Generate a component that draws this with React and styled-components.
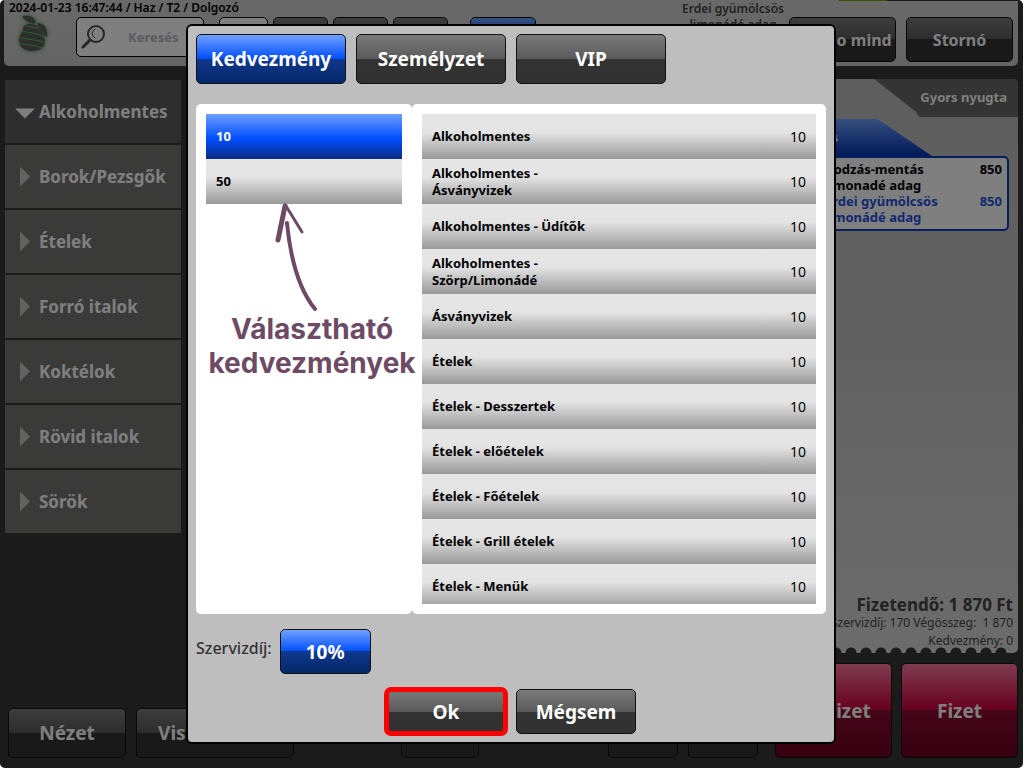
import React from "react";
import styled, { createGlobalStyle, css } from "styled-components";

const categories = ["Alkoholmentes", "Borok/Pezsgők", "Ételek", "Forró italok", "Koktélok", "Rövid italok", "Sörök"];

const tabs = ["Kedvezmény", "Személyzet", "VIP"];

const discounts = [10, 50];

const groups = [
  "Alkoholmentes",
  "Alkoholmentes - Ásványvizek",
  "Alkoholmentes - Üdítők",
  "Alkoholmentes - Szörp/Limonádé",
  "Ásványvizek",
  "Ételek",
  "Ételek - Desszertek",
  "Ételek - előételek",
  "Ételek - Főételek",
  "Ételek - Grill ételek",
  "Ételek - Menük",
];

const App = () => {
  return (
    <>
      <GlobalStyle />
      <Screen>
        <Header />
        <Main>
          <Sidebar>
            {categories.map((name, i) => (
              <Category key={name} type="button" $open={i === 0}>
                <Caret $open={i === 0} />
                {name}
              </Category>
            ))}
          </Sidebar>
          <Receipt />
        </Main>
        <Footer />
        <Overlay>
          <DiscountDialog />
        </Overlay>
      </Screen>
    </>
  );
};

const Header = () => (
  <TopBar>
    <Brand>
      <Status>2024-01-23 16:47:44 / Haz / T2 / Dolgozó</Status>
      <Logo />
    </Brand>
    <Search>
      <SearchIcon />
      <input type="text" placeholder="Keresés" aria-label="Keresés" />
    </Search>
    <Tools>
      <Button $tone="light" $w={49} aria-label="Lista" />
      <Button $w={55} aria-label="Kártya" />
      <Button $w={55} aria-label="Asztal" />
      <Button $w={55} aria-label="Vendég" />
      <BlueTool $tone="blue" $w={66} aria-label="Kedvezmény" />
    </Tools>
    <LastItem>Erdei gyümölcsös limonádé adag</LastItem>
    <Actions>
      <Button $w={107} $size={16}>Storno mind</Button>
      <Button $w={107} $size={16}>Stornó</Button>
    </Actions>
    <Progress />
  </TopBar>
);

const Logo = () => (
  <LogoSvg width="34" height="38" viewBox="0 0 34 38" aria-hidden="true">
    <path d="M5 1C11 0 18 1 19 8C13 9 8 6 5 1z" />
    <path d="M20 8C27 8 31 13 30 22C25 20 22 14 20 8z" />
    <path d="M8 10C13 8 18 9 21 12C23 17 28 21 28 27C28 33 22 36 15 36C7 36 2 32 2 25C2 19 5 18 6 15C6 13 6 11 8 10z" />
    <g>
      <path d="M7 10C12 12 17 13 22 13M5 16C12 18 21 18 27 22M2 22C10 25 20 24 28 28M2 28C9 30 19 30 26 33" />
    </g>
  </LogoSvg>
);

const SearchIcon = () => (
  <svg width="24" height="24" viewBox="0 0 24 24" fill="none" stroke="#4c4c4c" strokeLinecap="round" aria-hidden="true">
    <circle cx="15" cy="9" r="8" strokeWidth="2" />
    <path d="M9 15l-7 7" strokeWidth="3" />
    <path d="M14 4a5 5 0 0 0 0 9" strokeWidth="1" />
  </svg>
);

const Receipt = () => (
  <ReceiptPanel>
    <QuickTab>
      <svg width="46" height="38" viewBox="0 0 46 38" aria-hidden="true">
        <path d="M0 0H46V38C45 38 44 35 41 32L4 3Q2 1 0 0z" fill="#686868" />
      </svg>
      <QuickLabel type="button">Gyors nyugta</QuickLabel>
    </QuickTab>
    <OrderTab>
      <span>Rendelés</span>
      <svg width="56" height="37" viewBox="0 0 56 37" aria-hidden="true">
        <defs>
          <linearGradient id="tab" x1="0" x2="0" y1="0" y2="1">
            <stop offset="0" stopColor="#6e9fff" />
            <stop offset="1" stopColor="#0033b4" />
          </linearGradient>
        </defs>
        <path d="M0 0Q3 0 6 3L56 37H0z" fill="url(#tab)" />
      </svg>
    </OrderTab>
    <OrderTable>
      <tbody>
        <tr>
          <td>Bodzás-mentás limonadé adag</td>
          <td>850</td>
        </tr>
        <Selected>
          <td>Erdei gyümölcsös limonádé adag</td>
          <td>850</td>
        </Selected>
      </tbody>
    </OrderTable>
    <Totals>
      <strong>Fizetendő: 1 870 Ft</strong>
      <span>Szervizdíj: 170 Végösszeg:&nbsp; 1 870</span>
      <span>Kedvezmény: 0</span>
    </Totals>
    <Perforation />
  </ReceiptPanel>
);

const Footer = () => (
  <BottomBar>
    <Button $w={118} $h={50}>Nézet</Button>
    <Button $w={158} $h={50}>Visszavonás</Button>
    <Spacer $grow={4} />
    <Button $w={78} $h={50} aria-label="Lap" />
    <Spacer $grow={5} />
    <Button $w={70} $h={50} aria-label="Előző" />
    <Button $w={70} $h={50} aria-label="Következő" />
    <PayGroup>
      <Button $tone="red" $w={117} $h={95}>Kp Fizet</Button>
      <Button $tone="red" $w={117} $h={95}>Fizet</Button>
    </PayGroup>
  </BottomBar>
);

const DiscountDialog = () => (
  <Dialog role="dialog" aria-label="Kedvezmény">
    <Tabs>
      {tabs.map((name, i) => (
        <Button key={name} $tone={i === 0 ? "blue" : "dark"} $w={150} $h={50}>
          {name}
        </Button>
      ))}
    </Tabs>
    <Panels>
      <Panel>
        {discounts.map((value, i) => (
          <Option key={value} type="button" $selected={i === 0}>
            {value}
          </Option>
        ))}
        <Note>
          <svg width="30" height="108" viewBox="0 0 30 108" aria-hidden="true">
            <path d="M9 2L2 36" strokeWidth="5" />
            <path d="M10 2L26 28" strokeWidth="3" />
            <path d="M11 19C14 50 21 83 39 105" strokeWidth="4" />
          </svg>
          Választható kedvezmények
        </Note>
      </Panel>
      <Panel>
        <GroupList>
          {groups.map((name) => (
            <Group key={name}>
              <b>{name}</b>
              <span>10</span>
            </Group>
          ))}
        </GroupList>
      </Panel>
    </Panels>
    <ServiceRow>
      <label htmlFor="service">Szervizdíj:</label>
      <Button id="service" $tone="blue" $w={91}>10%</Button>
    </ServiceRow>
    <Buttons>
      <OkButton $w={120}>Ok</OkButton>
      <Button $w={120}>Mégsem</Button>
    </Buttons>
  </Dialog>
);

const GlobalStyle = createGlobalStyle`
  * {
    box-sizing: border-box;
  }
  body {
    margin: 0;
    background: #fff;
    color: #000;
    font-family: "Noto Sans", "Open Sans", sans-serif;
  }
  button,
  input {
    font: inherit;
  }
`;

const tones = {
  dark: "linear-gradient(#7a7a7a, #5a5a5a 50%, #333 50%, #323232)",
  blue: "linear-gradient(#70a1ff, #004dff 50%, #10388c 50%, #04286a)",
  red: "linear-gradient(#ff769e, #d00040 49%, #8a0c30 50%, #6c0020)",
  light: "linear-gradient(#fff, #e4e4e4)",
};

const Button = styled.button.attrs({ type: "button" })`
  flex: none;
  width: ${({ $w }) => $w}px;
  height: ${({ $h = 45 }) => $h}px;
  padding: 0;
  border: 1px solid #111;
  border-radius: 5px;
  background: ${({ $tone = "dark" }) => tones[$tone]};
  color: #fff;
  font-size: ${({ $size = 19 }) => $size}px;
  font-weight: 700;
  white-space: nowrap;
  overflow: hidden;
`;

const Screen = styled.div`
  position: relative;
  display: flex;
  flex-direction: column;
  min-height: calc(100vh - 1px);
  margin-right: 1px;
  padding: 0 5px 10px 4px;
  background: #363636;
  border-radius: 5px;
  overflow: hidden;
`;

const TopBar = styled.header`
  position: relative;
  display: flex;
  align-items: flex-start;
  height: 66px;
  padding-right: 5px;
  background: linear-gradient(#d2d2d2, #c8c8c8);
  border-radius: 0 0 5px 5px;
`;

const Brand = styled.div`
  width: 72px;
  padding-left: 5px;
`;

const Status = styled.div`
  font-size: 12px;
  font-weight: 600;
  line-height: 15px;
  white-space: nowrap;
`;

const LogoSvg = styled.svg`
  display: block;
  margin-left: 8px;
  fill: #5c5c5c;
  filter: drop-shadow(0 0 2px #4c9a4c);

  g {
    fill: none;
    stroke: #58c458;
    stroke-width: 1;
  }
`;

const Search = styled.div`
  display: flex;
  align-items: center;
  width: 128px;
  height: 40px;
  margin-top: 17px;
  padding: 0 4px;
  border: 1px solid #000;
  border-radius: 5px;
  background: #fff;

  input {
    flex: 1;
    min-width: 0;
    padding: 0 0 0 23px;
    border: 0;
    background: none;
    font-size: 13px;
    font-weight: 700;
  }
  input::placeholder {
    color: #b4b4bc;
  }
`;

const Tools = styled.div`
  display: flex;
  gap: 5px;
  margin: 17px 0 0 15px;
`;

const BlueTool = styled(Button)`
  margin-left: 17px;
`;

const LastItem = styled.div`
  width: 112px;
  margin: 1px 0 0 auto;
  color: #444;
  font-size: 12px;
  font-weight: 600;
  line-height: 16px;
  text-align: center;
`;

const Actions = styled.div`
  display: flex;
  gap: 10px;
  padding-top: 17px;
`;

const Progress = styled.div`
  position: absolute;
  top: 0;
  right: 0;
  width: 179px;
  height: 1px;
  background: linear-gradient(90deg, #6aa800 48px, #333 48px);
`;

const Main = styled.div`
  flex: 1;
  display: flex;
  justify-content: space-between;
`;

const Sidebar = styled.nav`
  display: flex;
  flex-direction: column;
  gap: 2px;
  width: 177px;
  padding: 14px 0 0 1px;
`;

const Category = styled.button`
  display: flex;
  align-items: center;
  height: 63px;
  padding: 0 0 0 10px;
  border: 0;
  background: ${({ $open }) => ($open ? "#5c5c5c" : "#747470")};
  color: #fff;
  font-size: 17px;
  font-weight: 700;
`;

const Caret = styled.span`
  width: 20px;
  height: 20px;
  margin-right: 4px;
  background: ${({ $open }) => ($open ? "#fff" : "#c4c4c4")};
  clip-path: ${({ $open }) =>
    $open ? "polygon(0 7px, 100% 7px, 50% 17px)" : "polygon(5px 0, 15px 50%, 5px 100%)"};
`;

const ReceiptPanel = styled.section`
  display: flex;
  flex-direction: column;
  width: 244px;
  margin-top: 13px;
  background: linear-gradient(#bcbcbc, #c4c4c4 50%, #d8d8d8);
  border-radius: 5px;
  overflow: hidden;
`;

const QuickTab = styled.div`
  display: flex;
  justify-content: flex-end;
`;

const QuickLabel = styled.button`
  width: 98px;
  height: 38px;
  padding: 0 11px 2px 0;
  border: 0;
  background: #686868;
  color: #fff;
  font-size: 13px;
  font-weight: 700;
  text-align: right;
  white-space: nowrap;
`;

const OrderTab = styled.div`
  display: flex;
  margin-top: 2px;
  color: #fff;
  font-size: 13px;
  font-weight: 700;
  line-height: 37px;

  span {
    width: 102px;
    padding-right: 38px;
    background: linear-gradient(#6e9fff, #0033b4);
    text-align: right;
  }
`;

const OrderTable = styled.table`
  margin-right: 9px;
  padding: 3px 5px 4px 49px;
  border: 2px solid #0a3db8;
  border-radius: 0 5px 5px 5px;
  border-spacing: 0;
  background: #fff;
  font-size: 13px;
  font-weight: 700;
  line-height: 16px;

  td {
    padding: 0;
    vertical-align: top;
  }
  td:last-child {
    width: 50px;
    text-align: right;
  }
`;

const Selected = styled.tr`
  color: #2450dc;
`;

const Totals = styled.div`
  display: flex;
  flex-direction: column;
  align-items: flex-end;
  margin-top: auto;
  padding-right: 5px;
  color: #444;
  font-size: 12px;
  line-height: 18px;
  white-space: nowrap;

  strong {
    font-size: 17px;
  }
`;

const Perforation = styled.div`
  height: 6px;
  margin: -3px 9px 0 0;
  background: radial-gradient(circle at 7px 6px, #363636 5px, transparent 6px) right / 15px 6px repeat-x;
`;

const BottomBar = styled.footer`
  display: flex;
  align-items: flex-end;
  gap: 10px;
  height: 105px;
  padding-left: 4px;
`;

const Spacer = styled.div`
  flex: ${({ $grow }) => $grow};
`;

const PayGroup = styled.div`
  display: flex;
  gap: 9px;
  padding-left: 7px;
`;

const Overlay = styled.div`
  position: absolute;
  inset: 0;
  display: flex;
  align-items: center;
  justify-content: center;
  padding-right: 1px;
  background: rgba(0, 0, 0, 0.5);
`;

const Dialog = styled.div`
  width: 650px;
  max-width: 100%;
  padding: 8px;
  border: 2px solid #000;
  border-radius: 6px;
  background: #bebebe;
`;

const Tabs = styled.div`
  display: flex;
  gap: 10px;
`;

const Panels = styled.div`
  display: grid;
  grid-template-columns: 216px 1fr;
  height: 510px;
  margin: 20px 0 15px;
`;

const Panel = styled.div`
  position: relative;
  min-height: 0;
  padding: 10px;
  border-radius: 5px;
  background: #fff;
`;

const row = css`
  display: flex;
  align-items: center;
  width: 100%;
  height: 45px;
  padding: 0 10px;
  background: linear-gradient(#e6e6e6, #e4e4e4 40%, #999);
  font-size: 13px;
  line-height: 17px;
`;

const Option = styled.button`
  ${row}
  border: 0;
  color: #000;
  font-weight: 700;
  ${({ $selected }) =>
    $selected &&
    css`
      background: linear-gradient(#6e9fff, #004dff 55%, #0a2c80);
      color: #fff;
    `}
`;

const GroupList = styled.ul`
  height: 100%;
  margin: 0;
  padding: 0;
  list-style: none;
  overflow: hidden;
`;

const Group = styled.li`
  ${row}
  justify-content: space-between;

  b {
    max-width: 160px;
  }
  span {
    font-size: 14px;
  }
`;

/* hand drawn hint over the discount list */
const Note = styled.div`
  position: absolute;
  z-index: 1;
  top: 100px;
  left: 0;
  width: 232px;
  color: #6d4b64;
  font-family: Inter, sans-serif;
  font-size: 28px;
  font-weight: 700;
  line-height: 34px;
  text-align: center;

  svg {
    display: block;
    margin-left: 80px;
    overflow: visible;
    fill: none;
    stroke: #6d4b64;
    stroke-linecap: round;
  }
`;

const ServiceRow = styled.div`
  display: flex;
  align-items: center;
  gap: 8px;
  color: #333;
  font-size: 16px;

  label {
    padding-bottom: 8px;
    font-weight: 500;
  }
`;

const Buttons = styled.div`
  display: flex;
  justify-content: center;
  gap: 10px;
  margin-top: 15px;
`;

const OkButton = styled(Button)`
  outline: 5px solid #f00;
  outline-offset: -3px;
`;

export default App;
